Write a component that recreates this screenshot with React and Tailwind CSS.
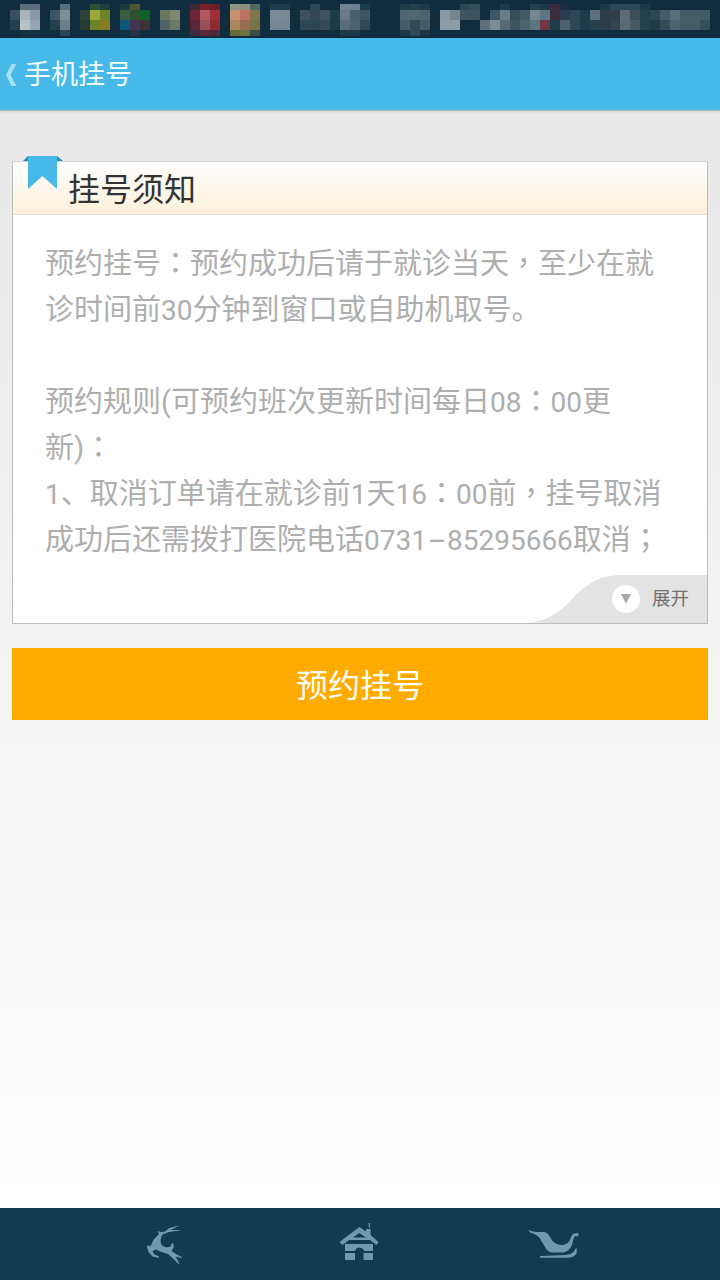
const MOSAIC = [
  [10, null, "#3a5060", "#234050", null],
  [20, "#5a6e7c", "#a8b4bc", "#b8c0c8", "#123040"],
  [30, "#5a6e7c", "#8a9aa6", "#98a6b0", "#123040"],
  [50, null, "#3c5464", "#23404e", null],
  [60, "#567080", "#7c8e9a", "#6a7e8c", "#2c4858"],
  [80, null, "#2c4436", "#243c34", null],
  [90, "#2a5038", "#9aa838", "#6c8428", null],
  [100, "#1c4040", "#6c8428", "#887c20", null],
  [120, "#1c3c40", "#3c5c40", "#105878", "#123040"],
  [130, "#4c5830", "#2c5030", "#403850", "#283048"],
  [140, null, "#106028", "#403038", null],
  [160, null, "#687860", "#506468", null],
  [170, null, "#7c8870", "#6c7868", null],
  [190, "#402838", "#6c2838", "#582838", "#3c2c3c"],
  [200, "#7c2028", "#b05860", "#985058", "#5c2838"],
  [210, "#6c2028", "#a03038", "#8c2c30", "#4c2838"],
  [230, "#8c9680", "#c8906c", "#a8885c", "#686838"],
  [240, "#8c9078", "#c07060", "#986c50", "#6c7040"],
  [250, "#506860", "#807848", "#787448", "#3c4c40"],
  [270, "#1c3c4c", "#788c98", "#748894", null],
  [280, "#1c3c4c", "#788a96", "#748894", null],
  [300, null, "#3c5060", "#2c4858", null],
  [310, "#2c4858", "#324858", "#2c4656", null],
  [320, null, "#3c5462", "#344c5a", null],
  [330, null, "#1c3c4c", "#1a3a4a", null],
  [340, "#708490", "#687c88", "#586c7a", "#1c3a4a"],
  [350, "#6c8090", "#46606e", "#4c6472", "#1c3a4a"],
  [360, "#1c3c4c", "#3c5664", "#2c4a58", null],
  [400, "#1c3c48", "#506670", "#445c68", "#1c3a4a"],
  [410, "#24404e", "#506670", "#2c4a58", "#2c4a58"],
  [420, "#1c3a4a", "#4c626e", "#445c68", "#1a3646"],
  [440, null, "#8a9aa2", "#8c9ca4", null],
  [450, null, "#74868e", "#8c9ca4", null],
  [460, "#2c4858", "#3c5664", null, null],
  [470, "#344e5c", "#3c5462", null, null],
  [480, null, null, "#5c707e", null],
  [490, null, "#3c5664", "#7c8c98", null],
  [500, "#1c3c4c", "#687c88", "#546a76", null],
  [510, null, "#344e5a", "#3c5460", null],
  [520, null, "#445c68", "#4c6470", null],
  [530, "#24404e", "#748690", "#5c7480", null],
  [540, "#1c3a4a", "#5c7484", "#703844", null],
  [550, "#3c2c3c", "#3a2c3c", "#1c3c4c", null],
  [560, "#1c2c40", "#2c3c50", "#4c6472", null],
  [570, null, "#2c4858", "#2c4858", null],
  [580, null, "#1c3c4c", "#1c3c4c", null],
  [590, null, "#5c7080", "#24404e", null],
  [600, "#1c3a48", "#2c3c48", "#2c3c48", null],
  [610, "#2c4858", "#323e4a", "#344450", null],
  [620, "#2c4858", "#5c6c78", "#586c78", null],
  [630, "#2c4858", "#3c4c58", "#485a64", null],
  [640, "#1c3a48", "#24404e", "#24404e", null],
  [650, null, "#2c4858", "#1c3c4a", null],
  [660, null, "#445c6c", "#344c58", null],
  [670, null, "#56707e", "#4c6470", null],
  [680, null, "#445c68", "#445c68", null],
  [690, null, "#445c68", "#445c68", null],
  [700, null, "#445c68", "#344e5a", null],
];
const ROWS = [[4, 6], [10, 10], [20, 10], [30, 6]];

function Mosaic() {
  return (
    <svg width="720" height="38" viewBox="0 0 720 38" shapeRendering="crispEdges" className="block">
      {MOSAIC.flatMap(([x, ...cols]) =>
        cols.map((c, i) =>
          c ? <rect key={x + "-" + i} x={x} y={ROWS[i][0]} width="10" height={ROWS[i][1]} fill={c} /> : null
        )
      )}
    </svg>
  );
}

function Deer() {
  return (
    <svg width="50" height="50" viewBox="140 1220 50 50" className="block" fill="#7099b0">
      <path d="M157.5 1232 L160.5 1233 L163 1232.8 L165 1233.5 L163 1235.3 L161.5 1237.5 L160.5 1241 L161 1245 L163.5 1247.5 L167 1248.5 L170.5 1247.5 L172 1244 L173.5 1244.5 L173.5 1249 L171.5 1252 L176 1255 L182 1258 L181 1259 L175.5 1257.5 L177 1260 L179.5 1265 L178.5 1265 L173 1259.5 L168 1255 L160 1252.5 L156 1250.5 L152.5 1252 L154 1255 L159 1257.5 L158.5 1259 L152.5 1257.5 L148.5 1253 L147 1248 L148 1246 L150 1247.5 L151.5 1245.5 L153 1241.5 L157 1237 L159 1235 Z" />
      <path d="M163 1233.5 L167 1231 L169 1229.2 L173 1228 L179.5 1226.6 L174 1229.2 L170.5 1231 L176 1231 L182 1231.6 L174 1232.3 L168 1233.2 L164.5 1235 Z" />
    </svg>
  );
}

function House() {
  return (
    <svg width="50" height="50" viewBox="335 1218 50 50" className="block" fill="#7099b0">
      <path d="M368.5 1224 L370 1224 L369.8 1229 L369 1229 Z" />
      <path fillRule="evenodd" d="M359.3 1228 L366 1232.5 L366 1230 L370.5 1230 L370.5 1236 L378.5 1243 L376.5 1246 L370 1241 L349 1241 L342.5 1246 L339.5 1243 Z M359.3 1234 L353 1238.5 L366 1238.5 Z" />
      <path d="M345 1245 L373 1245 L373 1252 L364 1252 L363 1250 Q359.5 1247 356 1250 L355 1252 L345 1252 Z" />
      <path d="M345 1254 L355 1254 L355 1261 L346 1261 Q345 1261 345 1260 Z" />
      <path d="M363.5 1254 L373 1254 L373 1260 Q373 1261 372 1261 L363.5 1261 Z" />
    </svg>
  );
}

function Sleigh() {
  return (
    <svg width="60" height="45" viewBox="525 1225 60 45" className="block" fill="#7099b0">
      <path d="M528 1235 Q533 1237 538 1237 L545 1237 Q548 1238 550 1242 Q552 1246 555 1248 Q559 1250.5 563 1250 Q568 1249 570 1245 Q571 1240 574 1238.5 L578 1238 L579 1240.5 L577 1241.5 L575 1241 Q573.5 1243 572 1250 Q570.5 1254 568 1255.5 Q565 1257.5 562 1257.5 L552 1257.5 Q549 1257 547 1255 Q544.5 1251 542 1247 Q540 1242.5 537 1240.5 Q534 1238.5 530 1237.5 Z" />
      <path d="M540 1261 L566 1260 Q571 1259.5 573.5 1257 L575.5 1253.5 L576.8 1253.5 L576.5 1258.5 Q574.5 1262.5 567 1262.8 L540 1262.8 Z" />
    </svg>
  );
}

// Digits are set a touch smaller and full-width punctuation is centred in its cell, as in the reference.
function T({ children }) {
  return children.split(/(\d+|[：，；]|-)/).map((part, i) => {
    if (/^\d+$/.test(part)) return <span key={i} className="text-[28px] leading-none">{part}</span>;
    if (part === "-") return <span key={i} className="inline-block w-[20px] text-center leading-none scale-x-[2]">-</span>;
    if (/^[：，；]$/.test(part)) return <span key={i} className="leading-none font-['Noto_Sans_CJK_TC',sans-serif]">{part}</span>;
    return part;
  });
}

export default function App() {
  return (
    <div className="w-[720px] h-[1280px] flex flex-col overflow-hidden font-['Roboto','Noto_Sans_CJK_SC',sans-serif]">
      <div className="h-[38px] bg-[#0f2d3e] shrink-0">
        <Mosaic />
      </div>
      <header className="h-[73px] shrink-0 bg-[#46b9e8] flex items-center pl-[5px] pt-[2px] gap-[6px] border-b border-[#aeb8ba]">
        <svg width="13" height="24" viewBox="0 0 13 24" className="block">
          <path d="M6.5 1 L11.5 1 L5.5 12 L11.5 23 L6.5 23 L1 12 Z" fill="#a5dff5" />
        </svg>
        <span className="text-[27px] text-[#f4fbfe] leading-none">手机挂号</span>
      </header>
      <main className="flex-1 px-3 pt-[50px] bg-gradient-to-b from-[#e8e8e8] to-[#ffffff] relative">
        <div className="absolute left-0 right-0 top-0 h-[3px] bg-gradient-to-b from-[#d8d8d8] to-[#e8e8e8]" />
        <section className="relative h-[463px] flex flex-col bg-white border border-[#bcbcbc] border-t-[#d6d6d6]">
          <div className="absolute left-[10px] top-[-6px] w-[40px] h-[35px]">
            <svg width="40" height="35" viewBox="0 0 40 35" className="block">
              <path d="M5 0 L0 5 L5 5 Z" fill="#1f8fbf" />
              <path d="M34 0 L40 5 L34 5 Z" fill="#1f8fbf" />
              <path d="M5 0 L34 0 L34 33 L19.5 20 L5 33 Z" fill="#46b9e8" />
            </svg>
          </div>
          <div className="h-[53px] shrink-0 pl-[55px] pt-[3px] bg-gradient-to-b from-[#ffffff] to-[#fdf0d9] border-b border-[#e6dfd2] flex items-center">
            <h2 className="text-[32px] font-normal text-[#333333] leading-none">挂号须知</h2>
          </div>
          <div className="pl-[32px] pr-[40px] pt-[26px] text-[29px] leading-[46px] text-[#aeaeae]">
            <p><T>预约挂号：预约成功后请于就诊当天，至少在就诊时间前30分钟到窗口或自助机取号。</T></p>
            <p className="mt-[46px]"><T>预约规则(可预约班次更新时间每日08：00更新)：</T></p>
            <p><T>1、取消订单请在就诊前1天16：00前，挂号取消成功后还需拨打医院电话0731-85295666取消；</T></p>
          </div>
          <div className="absolute right-0 bottom-0 w-[177px] h-[48px]">
            <svg width="177" height="48" viewBox="530 575 177 48" className="block">
              <path d="M530 623 C550 620 562 610 573 598 C585 585 600 575 620 575 L707 575 L707 623 Z" fill="#e3e3e3" />
            </svg>
            <div className="absolute left-[82px] top-[10px] w-[28px] h-[28px] rounded-full bg-white flex items-center justify-center">
              <svg width="12" height="12" viewBox="0 0 12 12">
                <path d="M1 1 L11 1 L6 11 Z" fill="#a8a8a8" />
              </svg>
            </div>
            <span className="absolute left-[122px] top-[14px] text-[18.5px] leading-[20px] text-[#707070]">展开</span>
          </div>
        </section>
        <button className="mt-[24px] w-full h-[72px] bg-[#ffab00] text-white text-[32px] pt-[3px] flex items-center justify-center">
          预约挂号
        </button>
      </main>
      <footer className="h-[72px] shrink-0 bg-[#143a4f] flex items-center pl-[140px]">
        <div className="w-[195px]"><Deer /></div>
        <div className="w-[190px] -mt-[4px]"><House /></div>
        <div className="-mt-[3px]"><Sleigh /></div>
      </footer>
    </div>
  );
}
